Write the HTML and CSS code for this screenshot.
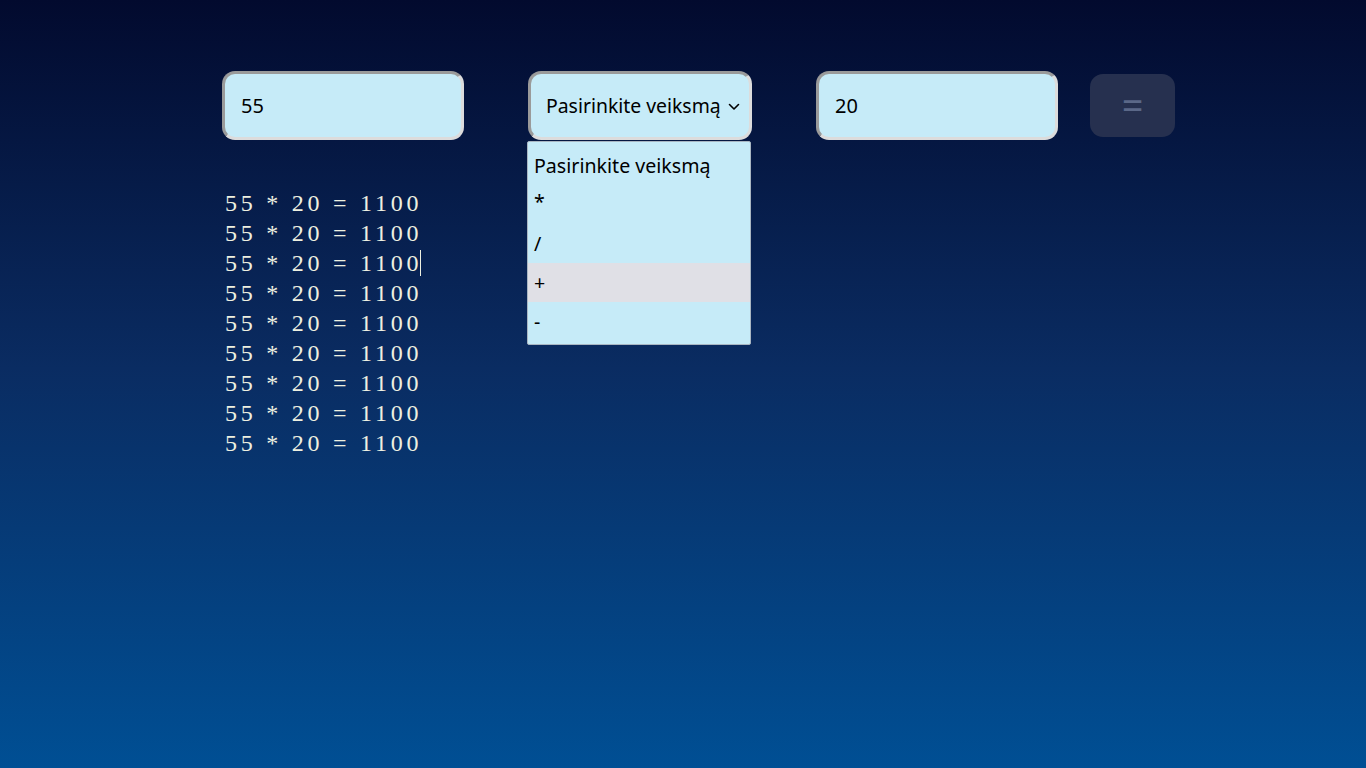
FILE: index.html
```html
<!DOCTYPE html>
<html lang="lt">
<head>
<meta charset="utf-8">
<title>Skaičiuotuvas</title>
<link rel="stylesheet" href="styles.css">
</head>
<body>
<main class="calc">
  <div class="controls">
    <div class="field">55</div>
    <div class="select-wrap">
      <div class="field select">
        <span>Pasirinkite veiksmą</span>
        <svg class="chev" width="12" height="8" viewBox="0 0 12 8"><path d="M1.5 1.5 L6 6 L10.5 1.5" fill="none" stroke="#000" stroke-width="1.6" stroke-linecap="round" stroke-linejoin="round"/></svg>
      </div>
      <ul class="options">
        <li class="opt first">Pasirinkite veiksmą</li>
        <li class="opt star">*</li>
        <li class="opt">/</li>
        <li class="opt hover">+</li>
        <li class="opt">-</li>
      </ul>
    </div>
    <div class="field">20</div>
    <button class="eq">=</button>
  </div>
  <div class="results">
    <div class="line">55 * 20 = 1100</div>
    <div class="line">55 * 20 = 1100</div>
    <div class="line">55 * 20 = 1100<span class="caret"></span></div>
    <div class="line">55 * 20 = 1100</div>
    <div class="line">55 * 20 = 1100</div>
    <div class="line">55 * 20 = 1100</div>
    <div class="line">55 * 20 = 1100</div>
    <div class="line">55 * 20 = 1100</div>
    <div class="line">55 * 20 = 1100</div>
  </div>
</main>
</body>
</html>
```
FILE: styles.css
```css
html, body {
  margin: 0;
  height: 100%;
}
body {
  background: linear-gradient(to bottom, #020a2e 0%, #0a2c62 48%, #004f94 100%);
  font-family: "Noto Sans", "Open Sans", sans-serif;
  overflow: hidden;
}
.calc {
  padding: 71px 0 0 222px;
}
.controls {
  display: flex;
  align-items: center;
}
.field {
  box-sizing: border-box;
  width: 242px;
  height: 69px;
  border: 3px solid #dcdcdc;
  border-top-color: #9a9a9a;
  border-left-color: #9a9a9a;
  border-radius: 13px;
  background: #c6ebf8;
  padding: 0 0 0 16px;
  display: flex;
  align-items: center;
  font-size: 20px;
  color: #000;
}
.select-wrap {
  position: relative;
  margin: 0 64px;
}
.select {
  width: 224px;
  padding: 0 9px 0 15px;
  justify-content: space-between;
  font-size: 19.4px;
}
.select span { white-space: nowrap; }
.chev { flex: none; margin-top: 2px; }
.options {
  position: absolute;
  left: -1px;
  top: 70px;
  width: 224px;
  box-sizing: border-box;
  margin: 0;
  padding: 0 0 3px 0;
  list-style: none;
  background: #c6ebf8;
  border: 1px solid #a9b6c2;
  border-radius: 2px;
  font-size: 19.6px;
  color: #000;
}
.opt {
  height: 39px;
  line-height: 39px;
  padding-left: 6px;
  white-space: nowrap;
}
.opt.first {
  height: 43px;
  line-height: 48px;
}
.opt.star {
  line-height: 34px;
}
.opt.hover {
  background: #e0e0e6;
}
.eq {
  margin-left: 32px;
  width: 85px;
  height: 63px;
  border: none;
  border-radius: 13px;
  background: #26304f;
  color: #5b6888;
  font-family: "Noto Sans", sans-serif;
  font-size: 38px;
  line-height: 1;
  padding: 0 0 4px 0;
}
.results {
  padding: 48px 0 0 3px;
  font-family: "Liberation Serif", "Times New Roman", serif;
  font-size: 24px;
  letter-spacing: 3.75px;
  color: #eef0e0;
}
.line {
  height: 30px;
  line-height: 30px;
}
.caret {
  display: inline-block;
  width: 1px;
  height: 26px;
  background: #eef0e0;
  vertical-align: -5px;
  margin-left: -2px;
}
```
